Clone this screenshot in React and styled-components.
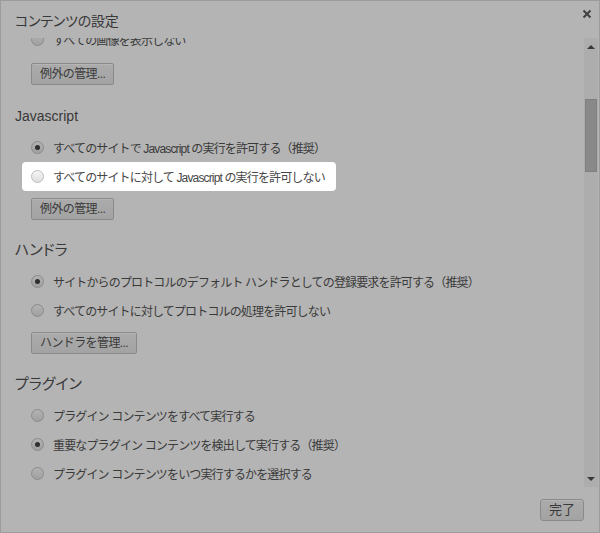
import React from "react";
import styled, { createGlobalStyle } from "styled-components";

const GlobalStyle = createGlobalStyle`
  html, body {
    margin: 0;
    padding: 0;
    background: #b4b4b4;
  }
  body {
    font-family: "Liberation Sans", "Noto Sans CJK JP", sans-serif;
  }
`;

const Dialog = styled.div`
  width: 600px;
  height: 533px;
  box-sizing: border-box;
  border: 1px solid #9c9c9c;
  background: #b4b4b4;
  color: #383838;
  display: flex;
  flex-direction: column;
  overflow: hidden;
`;

const TitleBar = styled.div`
  height: 37px;
  flex: none;
  display: flex;
  align-items: flex-start;
  justify-content: space-between;
  padding: 0 7px 0 14px;
`;

const Title = styled.h1`
  margin: 10px 0 0;
  font-size: 14px;
  letter-spacing: -0.2px;
  font-weight: normal;
  line-height: 20px;
  font-feature-settings: "palt" 1;
`;

const CloseButton = styled.div`
  margin-top: 8px;
  width: 10px;
  height: 10px;
  display: flex;
`;

const Body = styled.div`
  flex: 1;
  display: flex;
  min-height: 0;
`;

const ScrollArea = styled.div`
  flex: 1;
  overflow: hidden;
`;

const Content = styled.div`
  margin-top: -13px;
  display: flex;
  flex-direction: column;
  align-items: flex-start;
`;

const Heading = styled.h3`
  margin: ${(p) => (p.$latin ? 19 : 18)}px 0 5px 14px;
  height: 24px;
  line-height: 24px;
  font-size: ${(p) => (p.$latin ? 14 : 15)}px;
  font-weight: normal;
  font-feature-settings: "palt" 1;
`;

const Option = styled.label`
  margin-left: 21px;
  height: 29px;
  padding: 0 11px 0 9px;
  display: inline-flex;
  align-items: center;
  gap: 9px;
  border-radius: 4px;
  font-size: 12px;
  letter-spacing: -0.85px;
  white-space: nowrap;
  background: ${(p) => (p.$highlight ? "#ffffff" : "transparent")};
  color: ${(p) => (p.$highlight ? "#474747" : "#3a3a3a")};
`;

const Radio = styled.span`
  width: 13px;
  height: 13px;
  box-sizing: border-box;
  border-radius: 50%;
  flex: none;
  display: flex;
  align-items: center;
  justify-content: center;
  border: 1px solid ${(p) => (p.$light ? "#bdbdbd" : "#8a8a8a")};
  background: ${(p) =>
    p.$light
      ? "linear-gradient(#f6f6f6, #dedede)"
      : "linear-gradient(#b2b2b2, #a0a0a0)"};

  &::after {
    content: "";
    display: ${(p) => (p.$checked ? "block" : "none")};
    width: 5px;
    height: 5px;
    border-radius: 50%;
    background: #2e2e2e;
  }
`;

const Button = styled.button`
  margin: ${(p) => p.$gap ?? 7}px 0 0 ${(p) => (p.$inline ? 0 : 30)}px;
  height: 22px;
  padding: 0 8px;
  box-sizing: border-box;
  border: 1px solid #8a8a8a;
  border-radius: 2px;
  background: linear-gradient(#ababab, #a3a3a3);
  color: #3a3a3a;
  font-family: inherit;
  font-size: 12px;
  letter-spacing: -0.6px;
  line-height: 20px;
  box-shadow: inset 0 1px 0 #b5b5b5;
`;

const Scrollbar = styled.div`
  width: 14px;
  margin-right: 1px;
  background: #adadad;
  display: flex;
  flex-direction: column;
  align-items: center;
`;

const Arrow = styled.div`
  width: 0;
  height: 0;
  margin: ${(p) => (p.$down ? "auto 0 6px" : "7px 0 0")};
  border-left: 4px solid transparent;
  border-right: 4px solid transparent;
  ${(p) =>
    p.$down ? "border-top: 4px solid #383838;" : "border-bottom: 4px solid #383838;"}
`;

const Thumb = styled.div`
  margin-top: 50px;
  width: 12px;
  height: 73px;
  box-sizing: border-box;
  background: #898989;
  border: 1px solid #7f7f7f;
`;

const Footer = styled.div`
  height: 45px;
  box-sizing: border-box;
  flex: none;
  display: flex;
  justify-content: flex-end;
  align-items: flex-start;
  padding: 5px 15px 0 0;
`;

const DoneButton = styled(Button)`
  width: 44px;
  padding: 0;
  font-size: 13px;
  letter-spacing: 0;
  border-radius: 3px;
`;

const Choice = ({ checked, highlight, children }) => (
  <Option $highlight={highlight}>
    <Radio $checked={checked} $light={highlight} />
    {children}
  </Option>
);

const App = () => {
  return (
    <>
      <GlobalStyle />
      <Dialog>
        <TitleBar>
          <Title>コンテンツの設定</Title>
          <CloseButton>
            <svg width="10" height="10" viewBox="0 0 10 10">
              <path
                d="M1.5 1.5 L8.5 8.5 M8.5 1.5 L1.5 8.5"
                stroke="#404040"
                strokeWidth="2"
              />
            </svg>
          </CloseButton>
        </TitleBar>
        <Body>
          <ScrollArea>
            <Content>
              <Choice>すべての画像を表示しない</Choice>
              <Button $gap={9}>例外の管理...</Button>

              <Heading $latin>Javascript</Heading>
              <Choice checked>すべてのサイトで Javascript の実行を許可する（推奨）</Choice>
              <Choice highlight>すべてのサイトに対して Javascript の実行を許可しない</Choice>
              <Button>例外の管理...</Button>

              <Heading>ハンドラ</Heading>
              <Choice checked>
                サイトからのプロトコルのデフォルト ハンドラとしての登録要求を許可する（推奨）
              </Choice>
              <Choice>すべてのサイトに対してプロトコルの処理を許可しない</Choice>
              <Button>ハンドラを管理...</Button>

              <Heading>プラグイン</Heading>
              <Choice>プラグイン コンテンツをすべて実行する</Choice>
              <Choice checked>重要なプラグイン コンテンツを検出して実行する（推奨）</Choice>
              <Choice>プラグイン コンテンツをいつ実行するかを選択する</Choice>
            </Content>
          </ScrollArea>
          <Scrollbar>
            <Arrow />
            <Thumb />
            <Arrow $down />
          </Scrollbar>
        </Body>
        <Footer>
          <DoneButton $inline>完了</DoneButton>
        </Footer>
      </Dialog>
    </>
  );
};

export default App;
